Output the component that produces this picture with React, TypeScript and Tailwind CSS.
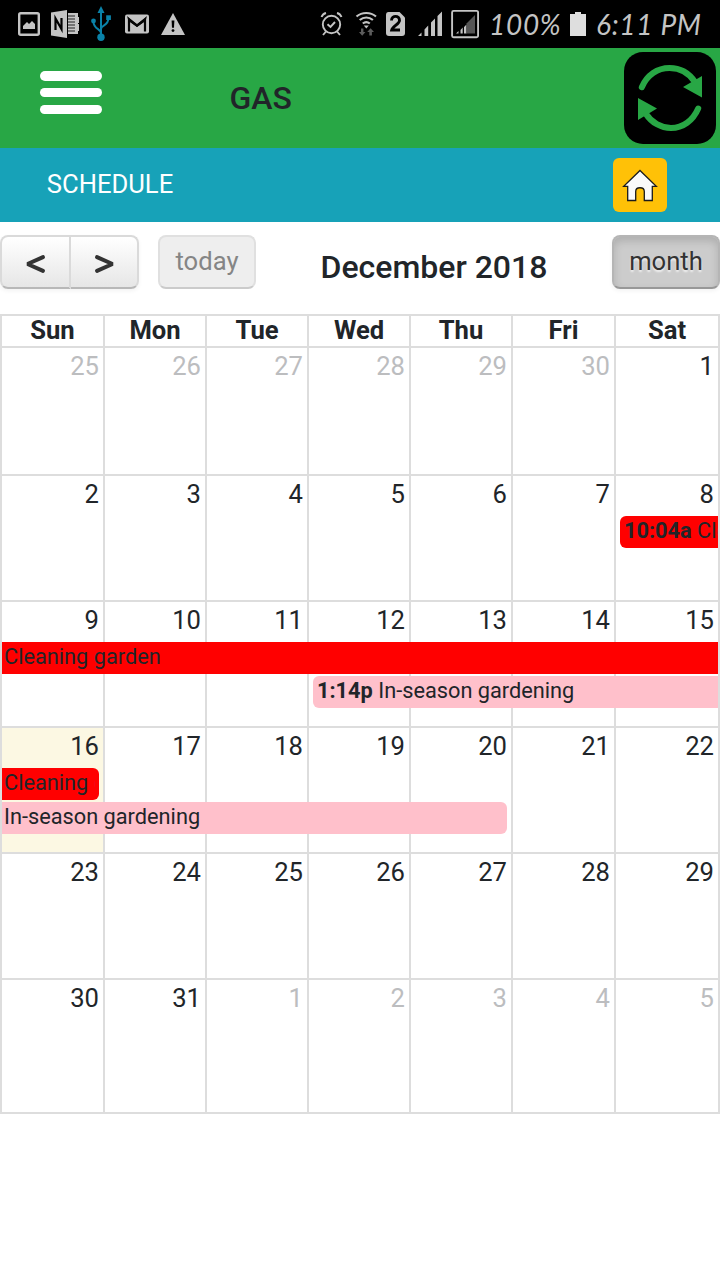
import React from "react";
import clsx from "clsx";

type CalendarEvent = {
  title: string;
  time?: string;
  place: string;
  tone: string;
};

type Week = { height: string; days: number[]; events?: CalendarEvent[] };

const COLUMNS = "grid grid-cols-[103px_102px_102px_102px_102px_103px_104px]";

const DAY_NAMES = ["Sun", "Mon", "Tue", "Wed", "Thu", "Fri", "Sat"];

const WEEKS: Week[] = [
  { height: "h-32", days: [25, 26, 27, 28, 29, 30, 1] },
  {
    height: "h-[126px]",
    days: [2, 3, 4, 5, 6, 7, 8],
    events: [
      {
        time: "10:04a",
        title: "Cleaning garden",
        place: "col-start-7 col-end-8 row-start-1 ml-1.5 rounded-l-md",
        tone: "bg-[#ff0000]",
      },
    ],
  },
  {
    height: "h-[126px]",
    days: [9, 10, 11, 12, 13, 14, 15],
    events: [
      { title: "Cleaning garden", place: "col-start-1 col-end-8 row-start-1 ml-0.5", tone: "bg-[#ff0000]" },
      {
        time: "1:14p",
        title: "In-season gardening",
        place: "col-start-4 col-end-8 row-start-2 ml-1.5 rounded-l-md",
        tone: "bg-[#ffc0cb]",
      },
    ],
  },
  {
    height: "h-[126px]",
    days: [16, 17, 18, 19, 20, 21, 22],
    events: [
      {
        title: "Cleaning garden",
        place: "col-start-1 col-end-2 row-start-1 ml-0.5 mr-1 rounded-r-md",
        tone: "bg-[#ff0000]",
      },
      {
        title: "In-season gardening",
        place: "col-start-1 col-end-6 row-start-2 ml-0.5 mr-1 rounded-r-md",
        tone: "bg-[#ffc0cb]",
      },
    ],
  },
  { height: "h-[126px]", days: [23, 24, 25, 26, 27, 28, 29] },
  { height: "h-[134px]", days: [30, 31, 1, 2, 3, 4, 5] },
];

function StatusBar() {
  return (
    <div className="flex h-12 bg-black pl-[11px] text-[#c4c4c4]">
      <svg className="h-12 w-9" viewBox="0 0 36 48">
        <rect x="8.2" y="13.2" width="19.6" height="21.6" rx="1.5" fill="none" stroke="#c4c4c4" strokeWidth="2.4" />
        <path d="M12 29v-3l4-4 2 2 3-3 3 3v5z" fill="#c4c4c4" />
      </svg>
      <svg className="h-12 w-9" viewBox="0 0 36 48">
        <path d="M4 12.5L20 10v28L4 35.5z" fill="#c4c4c4" />
        <path d="M8.500 30V18.500l6 10.500V18" fill="none" stroke="#000" strokeWidth="2.200" />
        <path d="M21 13h10v4h1v6h-1v1h1v7h-1v3H21z" fill="#c4c4c4" />
        <path d="M21 16h7M21 19h7M21 22h7M21 25h7M21 28h7M21 31h7" stroke="#222" strokeWidth="1" />
      </svg>
      <svg className="h-12 w-9" viewBox="0 0 36 48">
        <g fill="none" stroke="#0a82a8" strokeWidth="2">
          <path d="M18 10v28M18 33c0-4-7.500-4-7.500-11M18 29c0-4 7.500-3 7.500-11" />
        </g>
        <g fill="#0a82a8">
          <path d="M14.500 13L18 6l3.500 7z" />
          <circle cx="18" cy="37.200" r="3.700" />
          <circle cx="10.500" cy="21" r="2.400" />
          <rect x="23.200" y="15.300" width="4.700" height="4.700" />
        </g>
      </svg>
      <svg className="h-12 w-9" viewBox="0 0 36 48">
        <rect x="6" y="14.500" width="24" height="19" rx="2" fill="#c4c4c4" />
        <path d="M10 31.500V19.500l8 6 8-6v12" fill="none" stroke="#050505" strokeWidth="2.200" />
        <path d="M8 16l10 8.500L28 16l-1.500 5L18 27l-8.500-6z" fill="#050505" />
      </svg>
      <svg className="h-12 w-9" viewBox="0 0 36 48">
        <path d="M18 13L30 35H6z" fill="#c4c4c4" />
        <path d="M16.600 20.500h2.800l-.4 7.200h-2z" fill="#000" />
        <circle cx="18" cy="30.600" r="1.400" fill="#000" />
      </svg>
      <svg className="ml-[129px] h-12 w-[23px]" viewBox="320 0 23 48">
        <g fill="none" stroke="#c4c4c4" strokeWidth="1.900">
          <circle cx="331.500" cy="24.500" r="8.700" />
          <path d="M327.500 24.200l3 2.800 4.500-5M321.500 17c.8-2 2.400-3.500 4.500-4M341.500 17c-.8-2-2.400-3.500-4.500-4M326 31.500l-3 3.500M337 31.500l3 3.500" />
        </g>
      </svg>
      <svg className="ml-3 h-12 w-[23px]" viewBox="355 0 23 48">
        <g fill="none" stroke="#c4c4c4" strokeWidth="2.200">
          <path d="M356.500 16.500c5.500-4.700 14-4.700 19.500 0M359.700 20c4-3.300 9.200-3.300 13.200 0M362.800 23.500c2.200-1.800 4.800-1.800 7 0" />
        </g>
        <path d="M363.800 25.500h5l-2.500 3z" fill="#c4c4c4" />
        <path d="M361 28.500h2.400V32h2l-3.200 3.800-3.200-3.800h2zM369.300 35.500h2.600V32h2.100l-3.400-3.800-3.400 3.800h2.100z" fill="#5c5c5c" />
      </svg>
      <svg className="ml-2 h-12 w-5" viewBox="386 0 20 48">
        <path d="M388.500 12h11l5.500 5.500V33q0 3-3 3h-13q-3 0-3-3V15q0-3 2.500-3z" fill="#c4c4c4" />
        <path d="M391.500 20.500c.2-5.500 8-5.500 8 0 0 3.500-7 6-7.800 9.500h8.300" fill="none" stroke="#000" strokeWidth="2.900" />
      </svg>
      <svg className="ml-3 h-12 w-6" viewBox="418 0 24 48">
        <path d="M418 36l3.500-3.500V36zM424.500 36v-6.500l3.700-4V36zM431 36V22.500l4-4V36zM437.500 36V16l4.500-4.500V36z" fill="#c4c4c4" />
      </svg>
      <svg className="ml-[9px] h-12 w-7" viewBox="451 0 28 48">
        <rect x="452.100" y="10.900" width="26" height="26.300" rx="1.500" fill="none" stroke="#c4c4c4" strokeWidth="1.900" />
        <path d="M456 33.500l2.500-2.500v2.500zM460.500 33.500V30l2.200-2.500v6zM464 33.500V27l2.500-2.500v9z" fill="#c4c4c4" />
        <path d="M466.500 33.500v-10l8.500-8.500v18.500z" fill="#555" />
      </svg>
      <span className="ml-2.5 w-[81px] whitespace-nowrap font-['Lato'] text-[28px] italic leading-[48px] tracking-[0.7px]">100%</span>
      <svg className="h-12 w-4" viewBox="0 0 16 48">
        <path d="M0 14h5v-2h6v2h5v22H0z" fill="#dedede" />
      </svg>
      <span className="ml-[10px] whitespace-nowrap font-['Lato'] text-[28px] italic leading-[48px] tracking-[0.7px]">6:11 PM</span>
    </div>
  );
}

function AppHeader() {
  return (
    <header className="flex h-[100px] bg-[#28a745]">
      <button className="ml-[39.5px] mt-[23px] flex h-[43px] w-[62.5px] flex-col justify-between" aria-label="Menu">
        <span className="h-[9.5px] w-full rounded-full bg-white" />
        <span className="h-[9.5px] w-full rounded-full bg-white" />
        <span className="h-[9.5px] w-full rounded-full bg-white" />
      </button>
      <h1 className="ml-[127.5px] text-[32px] font-medium leading-[100px] text-[#212529]">GAS</h1>
      <button className="ml-auto mr-1 mt-1 size-[92px] rounded-[19px] bg-black" aria-label="Refresh">
        <svg className="size-[92px]" viewBox="624 52 92 92">
          <g fill="none" stroke="#28a745" strokeWidth="6" strokeLinecap="round">
            <path d="M641.800 87.200C647 75 657.500 68 669.500 68C680 68 689 73 695 82" />
            <path d="M698.200 108.500C693 120.500 683 128 671 128C661 128 651.500 122.500 646 114" />
          </g>
          <path d="M702 76v21.500L683 87zM638 98v22l19-11.500z" fill="#28a745" />
        </svg>
      </button>
    </header>
  );
}

function SectionBar() {
  return (
    <div className="flex h-[74px] items-start justify-between bg-[#17a2b8] pl-[46.8px] pr-[53px]">
      <h2 className="text-[25.6px] leading-[72px] text-white">SCHEDULE</h2>
      <button className="mt-2.5 size-[54px] rounded-md bg-[#ffc107]" aria-label="Home">
        <svg className="size-[54px]" viewBox="613 158 54 54">
          <path
            d="M640 170.500L656.300 186.300H652.300V200.500H644.300V191.500C644.300 186.500 635.700 186.500 635.700 191.500V200.500H627.700V186.300H623.700z"
            fill="#fafafa"
            stroke="#1b1b1b"
            strokeWidth="1.300"
          />
        </svg>
      </button>
    </div>
  );
}

const BUTTON = "h-[54px] border-2 text-[25.6px] text-center";

function Chevron({ flip }: { flip?: boolean }) {
  return (
    <svg className={clsx("h-[50px] w-6", flip ? "ml-0.5 -scale-x-100" : "mr-0.5")} viewBox="0 0 24 50">
      <path d="M20 20.200L4.500 27L20 33.800" fill="none" stroke="#333" strokeWidth="4" strokeLinecap="round" strokeLinejoin="bevel" />
    </svg>
  );
}

function Toolbar() {
  return (
    <div className="flex h-[92px] pt-[13px]">
      <div className="flex h-[54px] w-[139px] rounded-lg shadow-[0_2px_4px_rgba(0,0,0,0.05)]">
        <button
          className={clsx(BUTTON, "flex w-[71px] justify-center rounded-l-lg border-[#dadada] border-b-[#b8b8b8] bg-linear-to-b from-white to-[#e6e6e6]")}
          aria-label="Previous month"
        >
          <Chevron />
        </button>
        <button
          className={clsx(BUTTON, "flex w-[68px] justify-center rounded-r-lg border-l-0 border-[#dadada] border-b-[#b8b8b8] bg-linear-to-b from-white to-[#e6e6e6]")}
          aria-label="Next month"
        >
          <Chevron flip />
        </button>
      </div>
      <button className={clsx(BUTTON, "ml-[19px] w-[98px] rounded-lg border-[#e0e0e0] border-b-[#cbcbcb] bg-[#eeeeee] pb-0.5 leading-[46px] text-[#858585]")}>
        today
      </button>
      <h2 className="ml-[64.5px] whitespace-nowrap text-[32px] font-medium leading-[64px] text-[#212529]">December 2018</h2>
      <button
        className={clsx(
          BUTTON,
          "ml-auto w-[108px] rounded-lg border-[#b5b5b5] border-b-[#989898] bg-[#cccccc] pb-0.5 leading-[46px] text-[#333] shadow-[inset_0_4px_8px_rgba(0,0,0,0.15),0_2px_4px_rgba(0,0,0,0.05)] [text-shadow:0_2px_2px_rgba(255,255,255,0.75)]"
        )}
      >
        month
      </button>
    </div>
  );
}

function EventBar({ event }: { event: CalendarEvent }) {
  const continues = event.place.includes("col-end-8");
  return (
    <div className={clsx("h-8", event.place, event.tone, event.time ? "pl-1" : "pl-0.5", continues ? "pr-0" : "pr-1")}>
      <div className="overflow-hidden whitespace-nowrap text-[21.76px] leading-[30px]">
        {event.time && <span className="font-bold">{event.time} </span>}
        {event.title}
      </div>
    </div>
  );
}

function WeekRow({ week, index }: { week: Week; index: number }) {
  return (
    <div className={clsx("relative border-t-2 border-[#dddddd]", week.height)}>
      <div className={clsx(COLUMNS, "h-full")}>
        {week.days.map((day, i) => {
          const muted = (index === 0 && day > 7) || (index === 5 && day < 7);
          const today = index === 3 && i === 0;
          return (
            <div
              key={i}
              className={clsx(
                "border-l-2 border-[#dddddd] pr-1 text-right text-[25.6px] leading-9",
                muted && "text-[#bcbdbf]",
                today && "bg-[#fcf8e3]"
              )}
            >
              {day}
            </div>
          );
        })}
      </div>
      {week.events && (
        <div className={clsx(COLUMNS, "absolute left-0 top-10 grid-rows-[32px_32px] gap-y-0.5")}>
          {week.events.map((event, i) => (
            <EventBar key={i} event={event} />
          ))}
        </div>
      )}
    </div>
  );
}

function Calendar() {
  return (
    <section className="border-b-2 border-r-2 border-[#dddddd]">
      <div className={clsx(COLUMNS, "h-8 border-t-2 border-[#dddddd]")}>
        {DAY_NAMES.map((name) => (
          <div key={name} className="border-l-2 border-[#dddddd] text-center text-[25.6px] font-bold leading-[29px]">
            {name}
          </div>
        ))}
      </div>
      {WEEKS.map((week, i) => (
        <WeekRow key={i} week={week} index={i} />
      ))}
    </section>
  );
}

export default function App() {
  return (
    <main className="h-[1280px] w-[720px] overflow-hidden bg-white font-['Roboto',sans-serif] text-[#212529]">
      <StatusBar />
      <AppHeader />
      <SectionBar />
      <Toolbar />
      <Calendar />
    </main>
  );
}
